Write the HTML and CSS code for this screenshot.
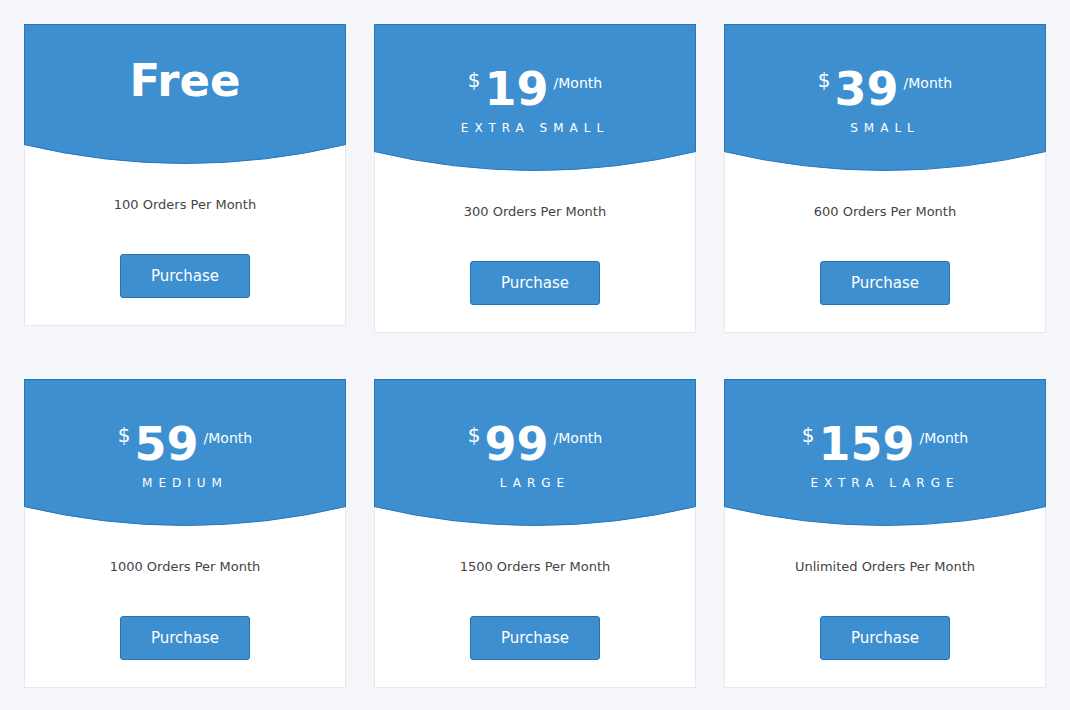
FILE: index.html
```html
<!DOCTYPE html>
<html lang="en">
<head>
    <meta charset="UTF-8">
    <meta name="viewport" content="width=device-width, initial-scale=1.0">
    <title>Pricing</title>
    <link rel="stylesheet" href="styles.css">
</head>
<body>

    <div class="plans">

        <div class="plan">
            <div class="plan-head free">
                <div class="price"><span class="amount">Free</span></div>
            </div>
            <svg class="curve" viewBox="0 0 322 20" width="322" height="20">
                <path class="fill" d="M0 0 L0 0.5 A692 692 0 0 0 322 0.5 L322 0 Z"/>
                <path class="edge" d="M0 0.5 A692 692 0 0 0 322 0.5"/>
            </svg>
            <div class="plan-body">
                <p class="orders">100 Orders Per Month</p>
                <button>Purchase</button>
            </div>
        </div>

        <div class="plan">
            <div class="plan-head">
                <div class="price"><span class="cur">$</span><span class="amount">19</span><span class="per">/Month</span></div>
                <div class="size">Extra Small</div>
            </div>
            <svg class="curve" viewBox="0 0 322 20" width="322" height="20">
                <path class="fill" d="M0 0 L0 0.5 A692 692 0 0 0 322 0.5 L322 0 Z"/>
                <path class="edge" d="M0 0.5 A692 692 0 0 0 322 0.5"/>
            </svg>
            <div class="plan-body">
                <p class="orders">300 Orders Per Month</p>
                <button>Purchase</button>
            </div>
        </div>

        <div class="plan">
            <div class="plan-head">
                <div class="price"><span class="cur">$</span><span class="amount">39</span><span class="per">/Month</span></div>
                <div class="size">Small</div>
            </div>
            <svg class="curve" viewBox="0 0 322 20" width="322" height="20">
                <path class="fill" d="M0 0 L0 0.5 A692 692 0 0 0 322 0.5 L322 0 Z"/>
                <path class="edge" d="M0 0.5 A692 692 0 0 0 322 0.5"/>
            </svg>
            <div class="plan-body">
                <p class="orders">600 Orders Per Month</p>
                <button>Purchase</button>
            </div>
        </div>

        <div class="plan">
            <div class="plan-head">
                <div class="price"><span class="cur">$</span><span class="amount">59</span><span class="per">/Month</span></div>
                <div class="size">Medium</div>
            </div>
            <svg class="curve" viewBox="0 0 322 20" width="322" height="20">
                <path class="fill" d="M0 0 L0 0.5 A692 692 0 0 0 322 0.5 L322 0 Z"/>
                <path class="edge" d="M0 0.5 A692 692 0 0 0 322 0.5"/>
            </svg>
            <div class="plan-body">
                <p class="orders">1000 Orders Per Month</p>
                <button>Purchase</button>
            </div>
        </div>

        <div class="plan">
            <div class="plan-head">
                <div class="price"><span class="cur">$</span><span class="amount">99</span><span class="per">/Month</span></div>
                <div class="size">Large</div>
            </div>
            <svg class="curve" viewBox="0 0 322 20" width="322" height="20">
                <path class="fill" d="M0 0 L0 0.5 A692 692 0 0 0 322 0.5 L322 0 Z"/>
                <path class="edge" d="M0 0.5 A692 692 0 0 0 322 0.5"/>
            </svg>
            <div class="plan-body">
                <p class="orders">1500 Orders Per Month</p>
                <button>Purchase</button>
            </div>
        </div>

        <div class="plan">
            <div class="plan-head">
                <div class="price"><span class="cur">$</span><span class="amount">159</span><span class="per">/Month</span></div>
                <div class="size">Extra Large</div>
            </div>
            <svg class="curve" viewBox="0 0 322 20" width="322" height="20">
                <path class="fill" d="M0 0 L0 0.5 A692 692 0 0 0 322 0.5 L322 0 Z"/>
                <path class="edge" d="M0 0.5 A692 692 0 0 0 322 0.5"/>
            </svg>
            <div class="plan-body">
                <p class="orders">Unlimited Orders Per Month</p>
                <button>Purchase</button>
            </div>
        </div>

    </div>

</body>
</html>
```

FILE: styles.css
```css
body {
    font-family: "DejaVu Sans", Verdana, sans-serif;
    background-color: #f5f6fa;
    margin: 0;
    padding: 24px;
}
.plans {
    display: grid;
    grid-template-columns: repeat(3, 322px);
    column-gap: 28px;
    row-gap: 46px;
    align-items: start;
}
.plan {
    background-color: white;
    border: 1px solid #e6e8ee;
}
.plan-head {
    margin: -1px -1px 0;
    padding: 41px 0 17px;
    background-color: #3d8fd0;
    border: 1px solid #2676bb;
    border-bottom: none;
    color: white;
    text-align: center;
}
.plan-head.free {
    padding: 33px 0 41px;
}
.price {
    display: flex;
    justify-content: center;
    align-items: flex-start;
}
.cur {
    font-size: 20px;
    line-height: 1;
    margin: 4px 4px 0 0;
}
.amount {
    font-size: 46px;
    font-weight: bold;
    line-height: 1;
}
.free .amount {
    font-size: 45px;
}
.per {
    font-size: 14px;
    line-height: 1;
    margin: 10px 0 0 5px;
}
.size {
    margin-top: 10px;
    font-size: 12px;
    line-height: 12px;
    letter-spacing: 6px;
    text-transform: uppercase;
}
.curve {
    display: block;
    margin: 0 -1px;
}
.curve .fill {
    fill: #3d8fd0;
}
.curve .edge {
    fill: none;
    stroke: #2676bb;
    stroke-width: 1;
}
.plan-body {
    padding: 31px 0 27px;
    text-align: center;
}
.orders {
    margin: 0;
    font-size: 13px;
    line-height: 20px;
    color: #444;
}
button {
    display: block;
    width: 130px;
    height: 44px;
    margin: 39px auto 0;
    background-color: #3d8fd0;
    border: 1px solid #2274b8;
    border-radius: 3px;
    color: white;
    font-family: "DejaVu Sans", Verdana, sans-serif;
    font-size: 15px;
    cursor: pointer;
}
button:hover {
    background-color: #3584c4;
}
```
